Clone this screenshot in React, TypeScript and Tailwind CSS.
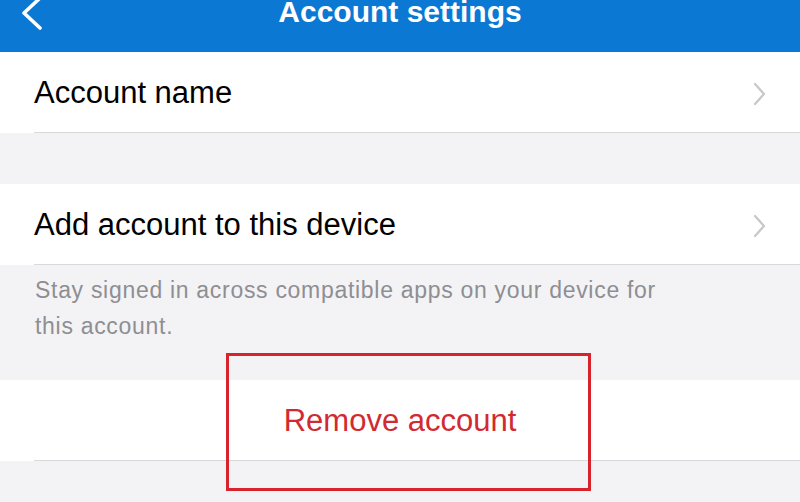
import { ReactNode } from "react";

const font = { fontFamily: '"Liberation Sans", Arial, sans-serif' };

function Chevron() {
  return (
    <svg width="16" height="24" viewBox="0 0 16 24" className="shrink-0">
      <path d="M3 2 L12 12 L3 22" fill="none" stroke="#c7c7ca" strokeWidth="2.2" strokeLinecap="round" strokeLinejoin="round" />
    </svg>
  );
}

function Row({ children, chevron = true, center = false }: { children: ReactNode; chevron?: boolean; center?: boolean }) {
  return (
    <div className={`bg-white h-[81px] ${center ? "" : "pl-[34px]"}`}>
      <div className={`h-full border-b border-[#d9d9dc] flex items-center pt-[3px] ${center ? "justify-center ml-[34px] -indent-[34px]" : "justify-between pr-[32px]"}`}>
        {children}
        {chevron && <Chevron />}
      </div>
    </div>
  );
}

export default function App() {
  return (
    <div className="w-[800px] h-[502px] overflow-hidden bg-[#f3f3f5] relative" style={font}>
      <header className="h-[52px] bg-[#0b78d3] relative flex justify-center">
        <svg width="24" height="32" viewBox="0 0 24 32" className="absolute left-[18px] top-0">
          <path d="M22 -2 L6 13 L22 28" fill="none" stroke="white" strokeWidth="3.6" strokeLinecap="round" strokeLinejoin="round" />
        </svg>
        <h1 className="text-white text-[30px] font-bold leading-[30px] -mt-[3px]">Account settings</h1>
      </header>

      <Row>
        <span className="text-[31px] text-black">Account name</span>
      </Row>

      <div className="h-[51px]" />

      <Row>
        <span className="text-[31px] text-black">Add account to this device</span>
      </Row>

      <div className="h-[115px] pl-[35px] pr-[120px] pt-[7px]">
        <p className="text-[23px] leading-[36px] tracking-[0.7px] text-[#8e8e93]">
          Stay signed in across compatible apps on your device for this account.
        </p>
      </div>

      <Row chevron={false} center>
        <span className="text-[31px] text-[#d22a31]">Remove account</span>
      </Row>

      <div className="absolute left-[226px] top-[353px] w-[365px] h-[138px] border-[3px] border-[#d7232b]" />
    </div>
  );
}
